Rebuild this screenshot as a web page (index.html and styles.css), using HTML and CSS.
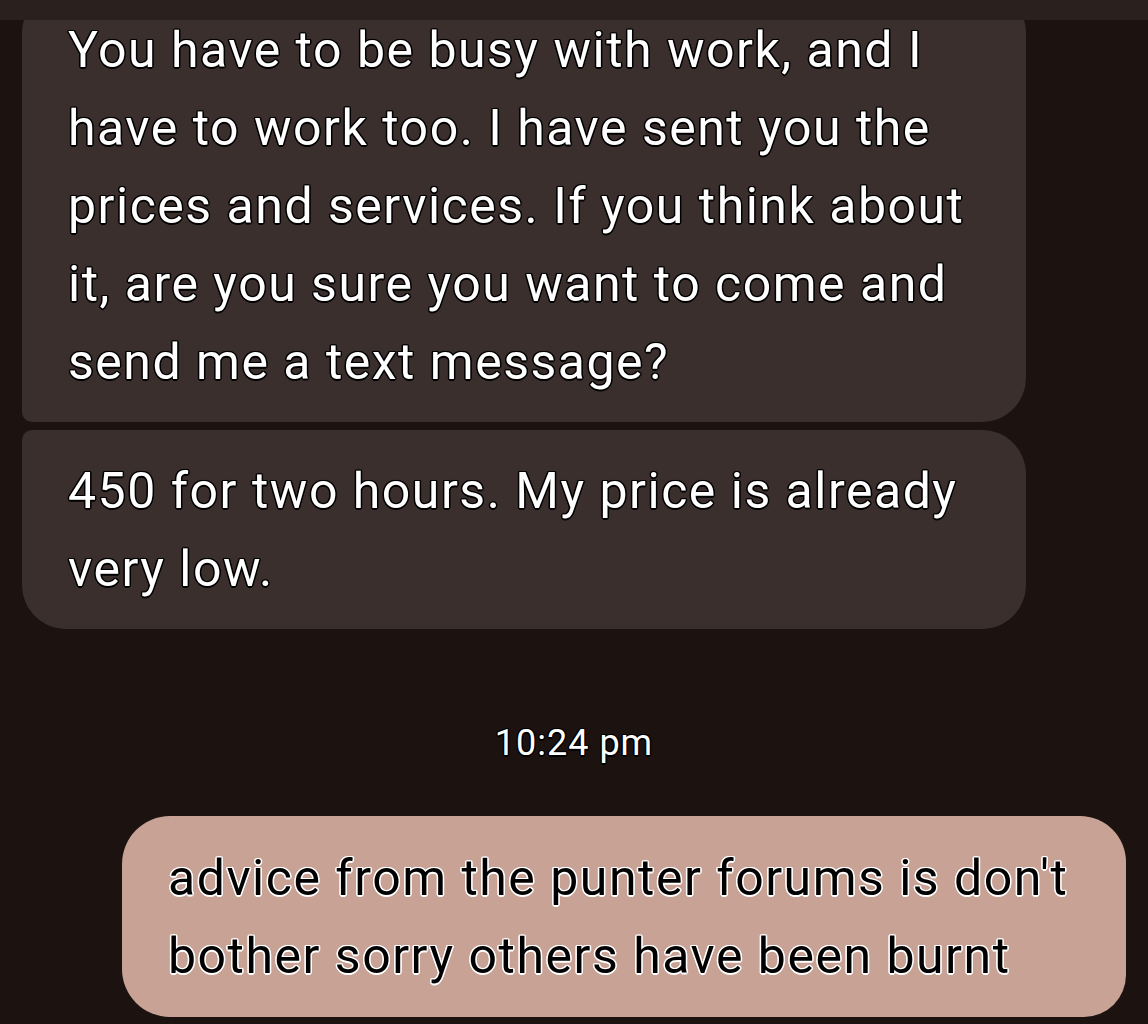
FILE: index.html
```html
<!DOCTYPE html>
<html lang="en">
<head>
<meta charset="utf-8">
<title>Messages</title>
<link rel="stylesheet" href="styles.css">
</head>
<body>
<div class="screen">
  <div class="topbar"></div>
  <div class="thread">
    <div class="bubble received first">You have to be busy with work, and I have to work too. I have sent you the prices and services. If you think about it, are you sure you want to come and send me a text message?</div>
    <div class="bubble received last">450 for two hours. My price is already very low.</div>
    <div class="timestamp">10:24 pm</div>
    <div class="bubble sent">advice from the punter forums is don't bother sorry others have been burnt</div>
  </div>
</div>
</body>
</html>
```

FILE: styles.css
```css
html, body {
  margin: 0;
  padding: 0;
  background: #1c1311;
}
.screen {
  width: 1148px;
  height: 1024px;
  overflow: hidden;
  display: flex;
  flex-direction: column;
  background: #1c1311;
  font-family: Roboto, "Noto Sans", "Liberation Sans", sans-serif;
}
.topbar {
  height: 20px;
  flex: none;
  background: #2a211f;
  position: relative;
  z-index: 2;
}
.thread {
  flex: 1;
  display: flex;
  flex-direction: column;
  padding: 0 22px;
  overflow: hidden;
}
.bubble {
  box-sizing: border-box;
  width: 1004px;
  padding: 22px 46px 21px;
  font-size: 50px;
  line-height: 78px;
  letter-spacing: 1.5px;
}
.received {
  align-self: flex-start;
  background: #3a2f2d;
  color: #fff;
  text-shadow:
    1.5px 0 0 #000, -1.5px 0 0 #000, 0 1.5px 0 #000, 0 -1.5px 0 #000,
    1px 1px 0 #000, -1px -1px 0 #000, 1px -1px 0 #000, -1px 1px 0 #000,
    0 0 2px #000;
}
.received.first {
  margin-top: -31px;
  border-radius: 44px 44px 44px 10px;
}
.received.last {
  margin-top: 8px;
  border-radius: 10px 44px 44px 44px;
}
.timestamp {
  align-self: center;
  margin-top: 90px;
  font-size: 36px;
  line-height: 48px;
  letter-spacing: 1px;
  color: #fff;
  text-shadow:
    1.5px 0 0 #000, -1.5px 0 0 #000, 0 1.5px 0 #000, 0 -1.5px 0 #000,
    1px 1px 0 #000, -1px -1px 0 #000, 1px -1px 0 #000, -1px 1px 0 #000;
}
.sent {
  align-self: flex-end;
  margin-top: 49px;
  padding-top: 23px;
  padding-bottom: 22px;
  background: #c9a296;
  color: #000;
  border-radius: 48px 46px 42px 48px;
  text-shadow:
    1.5px 0 0 #fff, -1.5px 0 0 #fff, 0 1.5px 0 #fff, 0 -1.5px 0 #fff,
    1px 1px 0 #fff, -1px -1px 0 #fff, 1px -1px 0 #fff, -1px 1px 0 #fff;
}
```
